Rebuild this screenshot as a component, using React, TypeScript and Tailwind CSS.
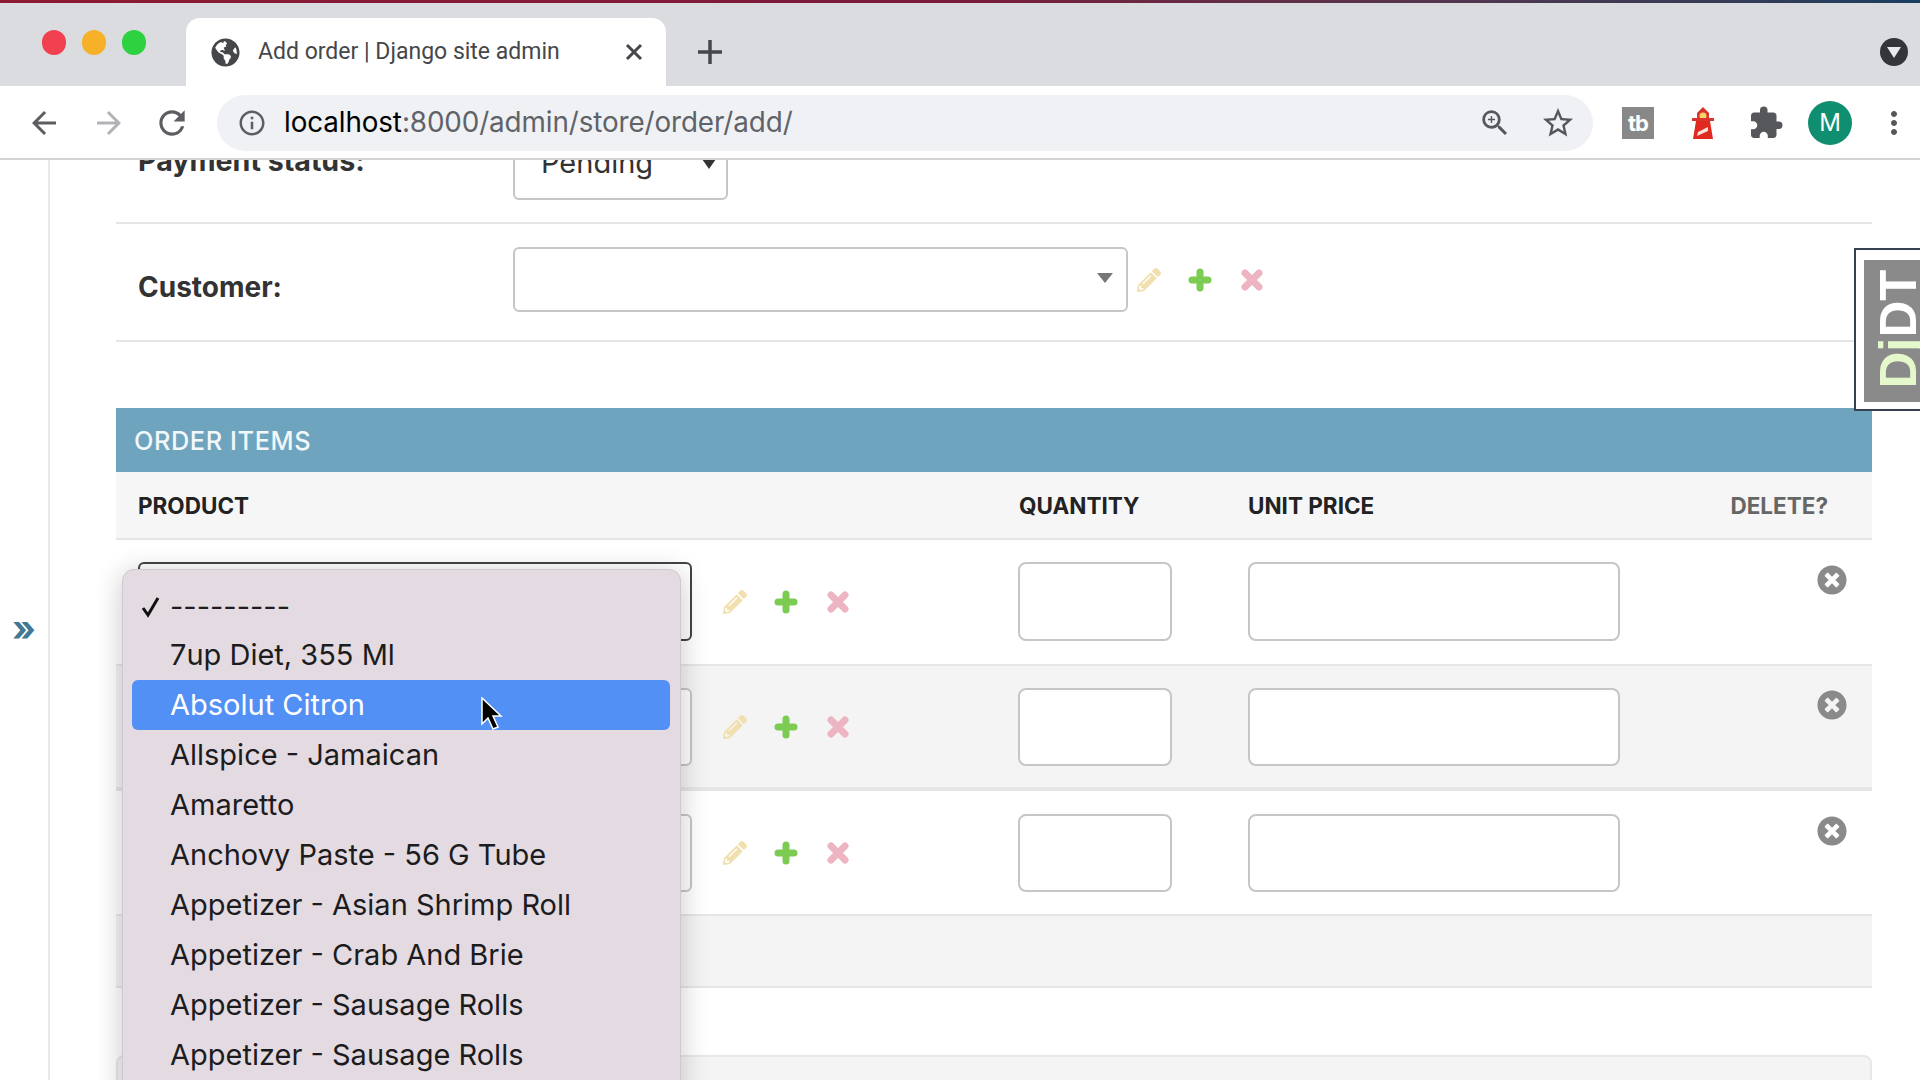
import { FaGlobeAmericas, FaPencilAlt, FaTimesCircle } from "react-icons/fa";
import {
  MdArrowBack,
  MdArrowForward,
  MdExtension,
  MdInfoOutline,
  MdMoreVert,
  MdOutlineStarBorder,
  MdRefresh,
  MdZoomIn,
} from "react-icons/md";

const MENU_ITEMS = [
  "7up Diet, 355 Ml",
  "Absolut Citron",
  "Allspice - Jamaican",
  "Amaretto",
  "Anchovy Paste - 56 G Tube",
  "Appetizer - Asian Shrimp Roll",
  "Appetizer - Crab And Brie",
  "Appetizer - Sausage Rolls",
  "Appetizer - Sausage Rolls",
];

const RelatedIcons = () => (
  <div className="flex items-center gap-[27px]">
    <FaPencilAlt className="w-[24px] h-[24px] text-[#f2dfae]" />
    <svg width="24" height="24" viewBox="0 0 24 24">
      <path d="M12 4v16M4 12h16" stroke="#7ccb52" strokeWidth="7" strokeLinecap="round" />
    </svg>
    <svg width="24" height="24" viewBox="0 0 24 24" className="ml-[1px]">
      <path d="M5 5l14 14M19 5L5 19" stroke="#edb5c1" strokeWidth="7" strokeLinecap="round" />
    </svg>
  </div>
);

const Caret = () => (
  <svg width="18" height="12" viewBox="0 0 18 12">
    <path d="M1 1h16l-8 10z" fill="#777" />
  </svg>
);

const Lighthouse = () => (
  <svg width="24" height="32" viewBox="0 0 24 32">
    <path d="M12 0l6 6v6H6V6z" fill="#d9342b" />
    <circle cx="12" cy="9" r="3.5" fill="#f6d36b" />
    <path d="M1 11h22v3H1z" fill="#d9342b" />
    <path d="M5 14h14l3 18H2z" fill="#e0291f" />
    <path d="M7 25l10-5v4L6 29z" fill="#f6e3df" />
  </svg>
);

const ItemRow = ({
  height,
  inputHeight,
  top,
  focused,
  shaded,
  thick,
}: {
  height: string;
  inputHeight: string;
  top: string;
  focused?: boolean;
  shaded?: boolean;
  thick?: boolean;
}) => (
  <div
    className={`grid grid-cols-[902px_230px_1fr] ${height} ${top} ${shaded ? "bg-[#f4f4f4]" : "bg-white"} ${
      thick ? "border-b-[4px]" : "border-b-2"
    } border-[#e6e6e6]`}
  >
    <div className="flex items-start pl-[22px]">
      <div
        className={`w-[554px] ${inputHeight} bg-white rounded-md border-2 ${
          focused ? "border-[#444]" : "border-[#c6c6c6]"
        }`}
      />
      <div className={`ml-[31px] flex ${inputHeight} items-center`}>
        <RelatedIcons />
      </div>
    </div>
    <div>
      <div className={`w-[154px] ${inputHeight} bg-white rounded-lg border-2 border-[#c6c6c6]`} />
    </div>
    <div className="flex justify-between">
      <div className={`w-[372px] ${inputHeight} bg-white rounded-lg border-2 border-[#c6c6c6]`} />
      <FaTimesCircle
        className={`w-[30px] h-[30px] mr-[25px] ${focused ? "mt-[3px]" : "mt-[2px]"} text-[#8a8a8a]`}
      />
    </div>
  </div>
);

export default function App() {
  return (
    <div className="relative w-[1920px] h-[1080px] overflow-hidden bg-white font-['Inter',sans-serif] text-black">
      <div className="h-[3px] bg-gradient-to-r from-[#8e1a33] via-[#7a1a3a] to-[#173f5f]" />

      {/* tab strip */}
      <div className="h-[83px] bg-[#dadce0] flex items-end">
        <div className="w-[186px] h-[68px] flex items-center gap-[16px] pl-[42px] pb-[20px]">
          <span className="w-[24px] h-[25px] rounded-full bg-[#f1404f]" />
          <span className="w-[24px] h-[25px] rounded-full bg-[#f6b128]" />
          <span className="w-[24px] h-[25px] rounded-full bg-[#2ed13f]" />
        </div>
        <div className="w-[480px] h-[68px] bg-white rounded-t-[14px] flex items-center pl-[25px] pr-[22px] text-[#45474a]">
          <FaGlobeAmericas className="w-[29px] h-[29px] text-[#45474a]" />
          <span className="ml-[18px] flex-1 text-[23px] font-['Roboto',sans-serif] whitespace-nowrap">
            Add order | Django site admin
          </span>
          <svg width="20" height="20" viewBox="0 0 20 20">
            <path d="M3 3l14 14M17 3L3 17" stroke="#45474a" strokeWidth="3" />
          </svg>
        </div>
        <div className="flex-1 h-[68px] flex items-center pl-[31px] pr-[12px] justify-between">
          <svg width="26" height="26" viewBox="0 0 26 26">
            <path d="M13 1v24M1 13h24" stroke="#45474a" strokeWidth="3.5" />
          </svg>
          <div className="w-[28px] h-[28px] rounded-full bg-[#33353b] flex items-center justify-center">
            <svg width="14" height="11" viewBox="0 0 14 11">
              <path d="M0 0h14l-7 11z" fill="#e8eaed" />
            </svg>
          </div>
        </div>
      </div>

      {/* toolbar */}
      <div className="h-[74px] bg-white border-b-2 border-[#d2d2d2] flex items-center pt-[2px]">
        <div className="w-[217px] pl-[26px] flex items-center text-[#5c5e62]">
          <MdArrowBack className="w-[36px] h-[36px]" />
          <MdArrowForward className="w-[36px] h-[36px] ml-[29px] text-[#b1b3b6]" />
          <MdRefresh className="w-[38px] h-[38px] ml-[26px]" />
        </div>
        <div className="w-[1376px] h-[56px] rounded-full bg-[#eff1f5] flex items-center pl-[20px] pr-[17px]">
          <MdInfoOutline className="w-[30px] h-[30px] text-[#5c5e62]" />
          <div className="ml-[17px] flex-1 text-[27.8px] tracking-[-0.1px] text-[#5f6368] whitespace-nowrap">
            <span className="text-black">localhost</span>:8000/admin/store/order/add/
          </div>
          <MdZoomIn className="w-[34px] h-[34px] text-[#55575b]" />
          <MdOutlineStarBorder className="w-[36px] h-[36px] ml-[28px] text-[#55575b]" />
        </div>
        <div className="flex-1 flex items-center pl-[29px]">
          <div className="w-[32px] h-[32px] bg-[#888] flex items-center justify-center text-white font-bold text-[22px] tracking-[-1px]">
            tb
          </div>
          <div className="ml-[37px] flex">
            <Lighthouse />
          </div>
          <MdExtension className="ml-[33px] w-[36px] h-[36px] text-[#55575b]" />
          <div className="ml-[24px] w-[44px] h-[44px] rounded-full bg-[#0f8f6f] flex items-center justify-center text-white text-[24px]">
            M
          </div>
          <MdMoreVert className="ml-[24px] w-[36px] h-[36px] text-[#55575b]" />
        </div>
      </div>

      {/* page */}
      <div className="flex h-[920px] overflow-hidden">
        <div className="relative w-[50px] shrink-0 border-r-2 border-[#e8e8e8]">
          <span className="absolute left-[12px] top-[446px] text-[36px] leading-[44px] font-bold text-[#417893]">»</span>
        </div>
        <div className="w-[1756px] ml-[66px] shrink-0">
          <div className="h-[64px] border-b-2 border-[#e6e6e6] overflow-hidden flex">
            <div className="w-[397px] pl-[22px] -mt-[17px] text-[28.6px] leading-[36px] font-bold text-[#333] h-[36px]">
              Payment status:
            </div>
            <div className="w-[215px] h-[40px] border-2 border-t-0 border-[#c6c6c6] rounded-b-md flex justify-between pl-[26px] pr-[10px] text-[29px] leading-[28px] text-[#333] overflow-hidden">
              <span className="-mt-[11px]">Pending</span>
              <svg width="14" height="10" viewBox="0 0 14 10" className="-mt-[1px]">
                <path d="M0 0h14l-7 10z" fill="#333" />
              </svg>
            </div>
          </div>
          <div className="h-[118px] border-b-2 border-[#e6e6e6] flex items-start pt-[23px]">
            <div className="w-[397px] pl-[22px] pt-[22px] text-[28px] leading-[36px] font-bold text-[#333]">
              Customer:
            </div>
            <div className="w-[615px] h-[65px] bg-white border-2 border-[#c6c6c6] rounded-md flex items-center justify-end pr-[12px] pb-[4px]">
              <Caret />
            </div>
            <div className="ml-[9px] flex h-[65px] items-center">
              <RelatedIcons />
            </div>
          </div>

          <div className="mt-[66px] h-[64px] bg-[#6fa4bf] flex items-center pl-[18px] pt-[2px] text-[25.3px] font-medium tracking-[0.6px] text-[#f2f7fa]">
            ORDER ITEMS
          </div>
          <div className="h-[68px] bg-[#f6f6f6] border-b-2 border-[#e6e6e6] grid grid-cols-[903px_229px_1fr] items-center pt-[1px] text-[22.5px] font-bold text-[#222]">
            <span className="pl-[22px]">PRODUCT</span>
            <span>QUANTITY</span>
            <div className="flex justify-between pr-[44px]">
              <span>UNIT PRICE</span>
              <span className="text-[#666]">DELETE?</span>
            </div>
          </div>
          <ItemRow height="h-[126px]" top="pt-[22px]" inputHeight="h-[79px]" focused />
          <ItemRow height="h-[125px]" top="pt-[22px]" inputHeight="h-[78px]" shaded thick />
          <ItemRow height="h-[125px]" top="pt-[23px]" inputHeight="h-[78px]" />
          <div className="h-[72px] bg-[#f4f4f4] border-b-2 border-[#e6e6e6]" />
          <div className="mt-[67px] h-[60px] bg-[#f4f4f4] border-2 border-[#e8e8e8] rounded-t-lg" />
        </div>
      </div>

      {/* native select menu */}
      <div className="absolute left-[122px] top-[569px] w-[559px] h-[540px] bg-[#e3dbe1] rounded-t-[12px] border border-[#cfc9cd] shadow-[0_4px_28px_rgba(0,0,0,0.22)] pt-[10px] pl-[9px] pr-[10px] text-[29px] text-[#1c1c1e]">
        <div className="relative h-[50px] flex items-center pl-[38px] pt-[4px]">
          <svg width="22" height="22" viewBox="0 0 22 22" className="absolute left-[8px] top-[16px]">
            <path d="M3 12l5 7L18 2" fill="none" stroke="#111" strokeWidth="3" />
          </svg>
          ---------
        </div>
        {MENU_ITEMS.map((item, i) => (
          <div
            key={i}
            className={`relative h-[50px] flex items-center pl-[38px] rounded-md whitespace-nowrap ${
              i === 1 ? "bg-[#5390f5] text-white" : ""
            }`}
          >
            {item}
            {i === 1 && (
              <svg width="24" height="36" viewBox="0 0 24 36" className="absolute left-[348px] top-[17px]">
                <path d="M2 1v26l6-6 5 11 5-2-5-11h8z" fill="#000" stroke="#fff" strokeWidth="1.5" />
              </svg>
            )}
          </div>
        ))}
      </div>

      {/* debug toolbar handle */}
      <div className="absolute left-[1854px] top-[248px] w-[70px] h-[163px] bg-white border-2 border-[#374151] pl-[8px] pt-[10px]">
        <div className="w-[70px] h-[142px] bg-[#8a8a8a] flex items-center justify-center overflow-hidden">
          <span className="-rotate-90 mb-[4px] text-[51px] leading-[40px] font-bold whitespace-nowrap font-['Liberation_Sans',sans-serif]">
            <span className="text-[#e5f8cc]">Dj</span>
            <span className="text-white">DT</span>
          </span>
        </div>
      </div>
    </div>
  );
}
